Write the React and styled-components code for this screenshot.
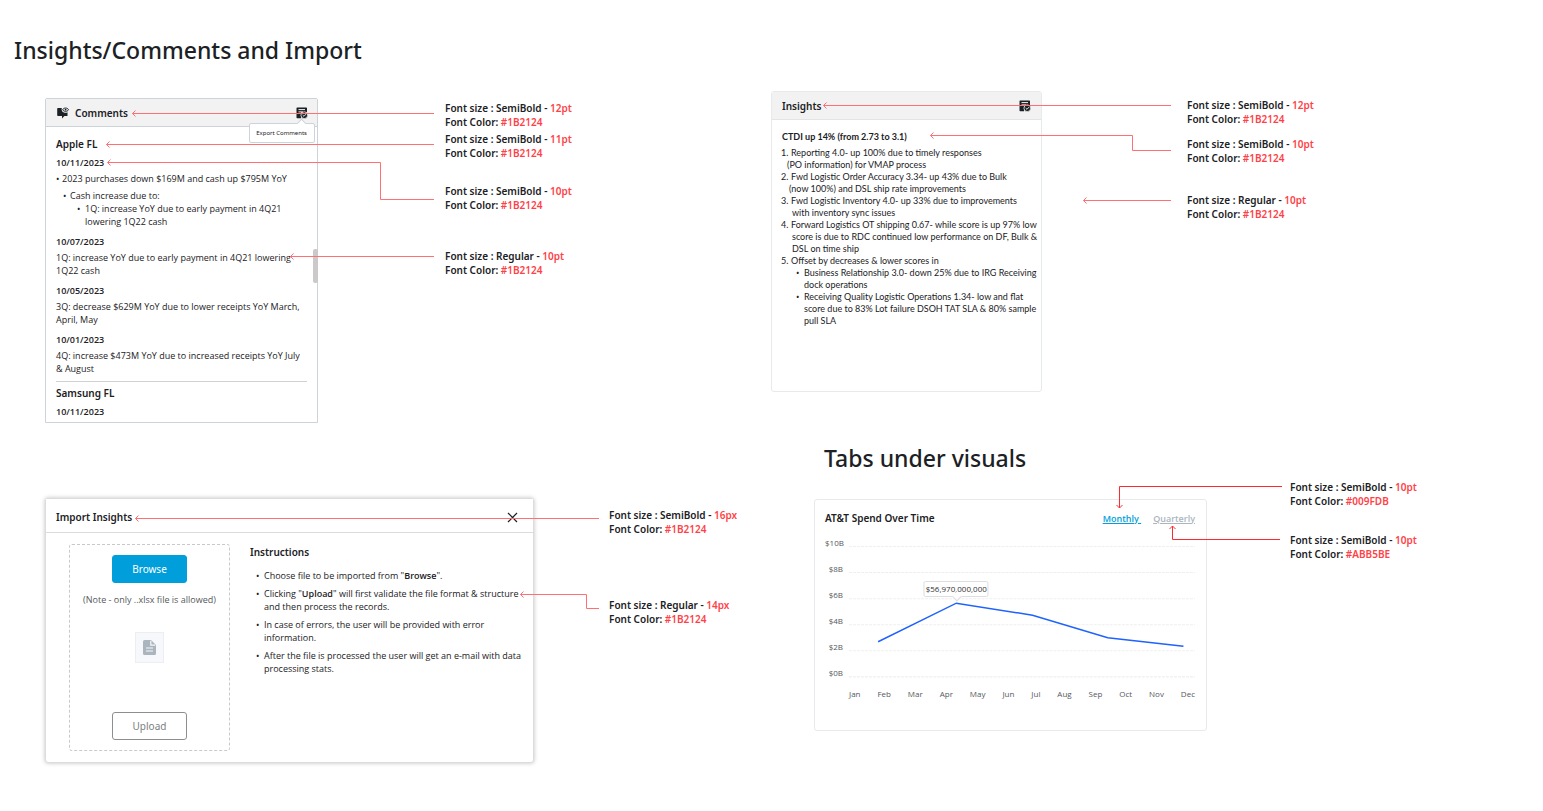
import React from "react";
import styled, { createGlobalStyle } from "styled-components";

const ink = "#1B2124";
const red = "#FF4147";
const labelFont = `"Noto Sans", "Open Sans", sans-serif`;

const GlobalStyle = createGlobalStyle`
  * { box-sizing: border-box; }
  body {
    margin: 0;
    background: #fff;
    color: ${ink};
    font: 400 9px/13px "Open Sans", "Noto Sans", sans-serif;
  }
  h1, h2, h3, h4, p, ul, ol { margin: 0; padding: 0; }
  ul, ol { list-style: none; }
  b { font-weight: 600; }
`;

const Page = styled.main`
  display: grid;
  grid-template-columns: 1fr 1fr;
  padding-right: 1px;
`;

const Column = styled.div`
  display: flex;
  flex-direction: column;
  padding-top: ${(p) => p.$top}px;
  padding-bottom: 24px;
`;

const PageTitle = styled.h1`
  margin-left: ${(p) => p.$left}px;
  font-family: ${labelFont};
  font-size: 23px;
  line-height: 32px;
  font-weight: 500;
`;

const Section = styled.section`
  position: relative;
  display: flex;
  align-items: flex-start;
  margin-top: ${(p) => p.$top}px;
  margin-left: ${(p) => p.$left}px;
`;

const Notes = styled.div`
  display: flex;
  flex-direction: column;
  padding-top: ${(p) => p.$top}px;
  margin-left: ${(p) => p.$left}px;
`;

const NoteText = styled.p`
  margin-top: ${(p) => p.$gap || 0}px;
  font-family: ${labelFont};
  font-size: 10px;
  line-height: 14px;
  font-weight: 600;
  white-space: nowrap;
`;

const Value = styled.span`
  color: ${red};
`;

const ConnectorLayer = styled.svg`
  position: absolute;
  inset: 0;
  width: 100%;
  height: 100%;
  overflow: visible;
  pointer-events: none;
  fill: none;
  stroke: ${(p) => (p.$strong ? "#FF2A30" : "#FF7074")};
  stroke-width: 1;
`;

const Card = styled.article`
  position: relative;
  display: flex;
  flex-direction: column;
  flex: none;
  background: #fff;
  border: 1px solid ${(p) => p.$border || "#e8e9ea"};
  border-radius: 3px;
`;

const CommentsCard = styled(Card)`
  width: 273px;
  height: 325px;
  border-radius: 2px 2px 0 0;
`;

const InsightsCard = styled(Card)`
  width: 271px;
  min-height: 301px;
`;

const ImportCard = styled(Card)`
  width: 489px;
  min-height: 265px;
  box-shadow: 0 0 4px rgba(0, 0, 0, 0.25);
`;

const ChartCard = styled(Card)`
  width: 393px;
  margin-top: 19px;
  padding: 10px 11px 30px 10px;
`;

const CardHeader = styled.header`
  display: flex;
  align-items: center;
  gap: 6px;
  height: 28px;
  flex: none;
  padding: 0 10px;
  background: #f2f2f2;
  border-bottom: 1px solid ${(p) => p.$border};
`;

const CommentsHeader = styled(CardHeader)`
  padding: 0 9px 0 11px;
`;

const ModalHeader = styled(CardHeader)`
  height: 34px;
  padding: 3px 15px 0 10px;
  background: #fff;
`;

const CardTitle = styled.h2`
  flex: 1;
  font-family: ${labelFont};
  font-size: 10px;
  line-height: 16px;
  font-weight: 600;
`;

const IconButton = styled.button`
  display: flex;
  padding: 0;
  border: 0;
  background: none;
  color: ${ink};
  cursor: pointer;
`;

const ExportTip = styled.div`
  position: absolute;
  top: 24px;
  right: 2px;
  padding: 3px 7px 3px 6px;
  font-family: ${labelFont};
  font-size: 6px;
  line-height: 12px;
  background: #fff;
  border: 1px solid #ccd3da;
  border-radius: 2px;

  &::before {
    content: "";
    position: absolute;
    top: -4px;
    right: 9px;
    width: 6px;
    height: 6px;
    background: #fff;
    border: solid #ccd3da;
    border-width: 1px 0 0 1px;
    transform: rotate(45deg);
  }
`;

const ScrollBody = styled.div`
  flex: 1;
  min-height: 0;
  overflow: hidden;
  padding: 9px 10px 0;
`;

const ScrollThumb = styled.div`
  position: absolute;
  top: 150px;
  right: -1px;
  width: 5px;
  height: 34px;
  border-radius: 2px;
  background: #ccc9ca;
`;

const Group = styled.section`
  & + & {
    margin-top: 6px;
    padding-top: 3px;
    border-top: 1px solid #cfd2d4;
  }
`;

const GroupTitle = styled.h3`
  margin-bottom: 4px;
  font-family: ${labelFont};
  font-size: 10px;
  line-height: 16px;
  font-weight: 600;
`;

const Entry = styled.div`
  & + & {
    margin-top: 7px;
  }
`;

const EntryDate = styled.h4`
  margin-bottom: 3px;
  font-size: 9px;
  line-height: 13px;
  font-weight: 600;
`;

const BulletList = styled.ul`
  display: flex;
  flex-direction: column;
  gap: ${(p) => p.$gap || 0}px;
  margin-top: ${(p) => p.$top || 0}px;
  padding-left: ${(p) => p.$indent}px;
`;

const Bullet = styled.li`
  &::before {
    content: "•";
    display: inline-block;
    width: ${(p) => p.$marker || 7}px;
    margin-left: -${(p) => p.$marker || 7}px;
    font-family: "Noto Sans", sans-serif;
    line-height: 1;
  }
`;

const InsightBody = styled.div`
  padding: 11px 0 0 9px;
  font-family: Lato, "Noto Sans", sans-serif;
  font-size: 9px;
  line-height: 12px;
  white-space: nowrap;
`;

const InsightTitle = styled.h3`
  margin: 0 0 4px 1px;
  font-size: 9px;
  line-height: 12px;
  font-weight: 700;
`;

const Numbered = styled.ol`
  counter-reset: insight;
`;

const NumberedItem = styled.li`
  counter-increment: insight;
  padding-left: ${(p) => p.$indent}px;

  &::before {
    content: counter(insight) ".";
    display: inline-block;
    width: 10px;
    margin-left: -${(p) => p.$indent}px;
  }
`;

const ImportBody = styled.div`
  display: flex;
  gap: 20px;
  padding: 11px 10px 11px 23px;
`;

const DropZone = styled.div`
  display: flex;
  flex-direction: column;
  align-items: center;
  flex: none;
  width: 161px;
  height: 207px;
  padding: 10px 0;
  border: 1px dashed #c9c9c9;
  border-radius: 3px;
`;

const ActionButton = styled.button`
  width: 75px;
  height: 28px;
  padding: 0;
  border: 1px solid ${(p) => (p.$primary ? "#009FDB" : "#8c8f91")};
  border-radius: 3px;
  background: ${(p) => (p.$primary ? "#009FDB" : "#fff")};
  color: ${(p) => (p.$primary ? "#fff" : "#7d8082")};
  font: 400 10px/14px ${labelFont};
  cursor: pointer;
`;

const FileHint = styled.p`
  margin-top: 10px;
  line-height: 14px;
  color: #55595c;
`;

const FileTile = styled.div`
  display: flex;
  align-items: center;
  justify-content: center;
  width: 29px;
  height: 31px;
  margin: 25px 0 auto;
  background: #f6f8fc;
  border: 1px solid #eceff2;
`;

const Instructions = styled.div`
  flex: 1;
  white-space: nowrap;
`;

const ChartHeader = styled.header`
  display: flex;
  align-items: center;
  gap: 12px;
`;

const Tab = styled.a`
  color: ${(p) => (p.$active ? "#009FDB" : "#ABB5BE")};
  font-weight: 600;
  text-decoration: underline;
  white-space: pre;
`;

const ChartArea = styled.div`
  display: flex;
  gap: 6px;
  margin-top: 4px;
  color: #55595c;
  font-size: 8px;
`;

const YAxis = styled.div`
  display: flex;
  flex-direction: column;
  width: 18px;
  line-height: 26px;
  text-align: right;
`;

const Plot = styled.div`
  position: relative;
  flex: 1;
  padding-top: 16px;
`;

const PlotSvg = styled.svg`
  display: block;
  width: 100%;
  overflow: visible;
`;

const XAxis = styled.div`
  display: flex;
  justify-content: space-between;
  margin-top: 11px;
  line-height: 12px;
`;

const PointTip = styled.div`
  position: absolute;
  top: 51px;
  left: 31%;
  transform: translateX(-50%);
  padding: 0 1px;
  color: #333;
  line-height: 14px;
  background: #fff;
  border: 1px solid #dedede;
  border-radius: 2px;

  &::after {
    content: "";
    position: absolute;
    left: 50%;
    bottom: -4px;
    width: 6px;
    height: 6px;
    margin-left: -3px;
    background: #fff;
    border: solid #dedede;
    border-width: 0 1px 1px 0;
    transform: rotate(45deg);
  }
`;

function CommentIcon() {
  return (
    <svg width="12" height="12" viewBox="0 0 12 12" aria-hidden="true">
      <path d="M1 1h3.800C4.200 3 5 5 7 5.600c1.300.4 2.600.2 3.500-.4V9H7.400L5 11.600V9H1a.8.8 0 0 1-.8-.8V1.800A.8.8 0 0 1 1 1z" fill={ink} />
      <path d="M5.700 2.700C6.600.5 10.600.5 11.500 2.700 10.600 4.900 6.600 4.900 5.700 2.700z" fill="#f2f2f2" stroke={ink} strokeWidth="1" />
      <circle cx="8.600" cy="2.700" r=".9" fill={ink} />
    </svg>
  );
}

function ExportIcon() {
  return (
    <svg width="12" height="12" viewBox="0 0 12 12" aria-hidden="true">
      <path d="M1.200.5h9.100a.7.7 0 0 1 .7.7V5H5v6.200H1.200a.7.7 0 0 1-.7-.7V1.200a.7.700 0 0 1 .7-.7z" fill={ink} />
      <path d="M2.500 2.600h6.500M2.500 4.900h4.500" stroke="#f2f2f2" strokeWidth="1" />
      <circle cx="8.300" cy="8.200" r="3.400" fill={ink} stroke="#f2f2f2" strokeWidth=".8" />
      <path d="M6.700 8.100l1.300 1.200 2-2.200" fill="none" stroke="#f2f2f2" strokeWidth=".9" />
    </svg>
  );
}

function FileIcon() {
  return (
    <svg width="13" height="15" viewBox="0 0 13 15" aria-hidden="true">
      <path d="M1.500 0H8l5 5v8.500a1.500 1.500 0 0 1-1.500 1.500h-10A1.500 1.500 0 0 1 0 13.500v-12A1.500 1.500 0 0 1 1.500 0z" fill="#abb5be" />
      <path d="M7.800.8v4.400h4.400M3 8h7M3 11h7" fill="none" stroke="#f6f8fc" strokeWidth="1.200" />
    </svg>
  );
}

function CloseIcon() {
  return (
    <svg width="11" height="11" viewBox="0 0 11 11" aria-hidden="true">
      <path d="M1 1l9 9M10 1l-9 9" stroke={ink} strokeWidth="1.200" />
    </svg>
  );
}

const heads = {
  left: "m3-3-3 3 3 3",
  down: "m-3-3 3 3 3-3",
  up: "m-3 3 3-3 3 3",
};

function Connectors({ lines, strong }) {
  return (
    <ConnectorLayer $strong={strong} aria-hidden="true">
      {lines.map(({ at, path, head = "left" }) => (
        <path key={at} d={`M${at}${path}M${at}${heads[head]}`} />
      ))}
    </ConnectorLayer>
  );
}

function Note({ weight = "SemiBold", size, color = "#1B2124", gap }) {
  return (
    <NoteText $gap={gap}>
      Font size : {weight} - <Value>{size}</Value>
      <br />
      Font Color: <Value>{color}</Value>
    </NoteText>
  );
}

const entries = [
  ["10/07/2023", "1Q: increase YoY due to early payment in 4Q21 lowering 1Q22 cash"],
  ["10/05/2023", "3Q: decrease $629M YoY due to lower receipts YoY March, April, May"],
  ["10/01/2023", "4Q: increase $473M YoY due to increased receipts YoY July & August"],
];

function CommentsSection() {
  return (
    <Section $top={32} $left={45}>
      <CommentsCard $border="#ccd3da">
        <CommentsHeader $border="#ccd3da">
          <CommentIcon />
          <CardTitle>Comments</CardTitle>
          <IconButton aria-label="Export comments"><ExportIcon /></IconButton>
        </CommentsHeader>
        <ExportTip role="tooltip">Export Comments</ExportTip>
        <ScrollBody>
          <Group>
            <GroupTitle>Apple FL</GroupTitle>
            <Entry>
              <EntryDate>10/11/2023</EntryDate>
              <BulletList $indent={6}>
                <Bullet $marker={6}>
                  2023 purchases down $169M and cash up $795M YoY
                  <BulletList $indent={8} $top={4}>
                    <Bullet>
                      Cash increase due to:
                      <BulletList $indent={15}>
                        <Bullet $marker={8}>
                          1Q: increase YoY due to early payment in 4Q21
                          <br />
                          lowering 1Q22 cash
                        </Bullet>
                      </BulletList>
                    </Bullet>
                  </BulletList>
                </Bullet>
              </BulletList>
            </Entry>
            {entries.map(([date, text]) => (
              <Entry key={date}>
                <EntryDate>{date}</EntryDate>
                <p>{text}</p>
              </Entry>
            ))}
          </Group>
          <Group>
            <GroupTitle>Samsung FL</GroupTitle>
            <EntryDate>10/11/2023</EntryDate>
          </Group>
        </ScrollBody>
        <ScrollThumb />
      </CommentsCard>
      <Notes $top={3} $left={127}>
        <Note size="12pt" />
        <Note size="11pt" gap={3} />
        <Note size="10pt" gap={24} />
        <Note weight="Regular" size="10pt" gap={37} />
      </Notes>
      <Connectors
        lines={[
          { at: "87.500 15.500", path: "H389" },
          { at: "61.500 46.500", path: "H389" },
          { at: "62.500 64.500", path: "H335.500V101.500H389" },
          { at: "245.500 158.500", path: "H389" },
        ]}
      />
    </Section>
  );
}

function ImportSection() {
  return (
    <Section $top={75} $left={45}>
      <ImportCard $border="#dcdcdc">
        <ModalHeader $border="#dcdcdc">
          <CardTitle>Import Insights</CardTitle>
          <IconButton aria-label="Close"><CloseIcon /></IconButton>
        </ModalHeader>
        <ImportBody>
          <DropZone>
            <ActionButton $primary>Browse</ActionButton>
            <FileHint>(Note - only ..xlsx file is allowed)</FileHint>
            <FileTile><FileIcon /></FileTile>
            <ActionButton>Upload</ActionButton>
          </DropZone>
          <Instructions>
            <CardTitle as="h3">Instructions</CardTitle>
            <BulletList $indent={14} $top={9} $gap={5}>
              <Bullet $marker={8}>Choose file to be imported from "<b>Browse</b>".</Bullet>
              <Bullet $marker={8}>
                Clicking "<b>Upload</b>" will first validate the file format &amp; structure
                <br />
                and then process the records.
              </Bullet>
              <Bullet $marker={8}>
                In case of errors, the user will be provided with error
                <br />
                information.
              </Bullet>
              <Bullet $marker={8}>
                After the file is processed the user will get an e-mail with data
                <br />
                processing stats.
              </Bullet>
            </BulletList>
          </Instructions>
        </ImportBody>
      </ImportCard>
      <Notes $top={10} $left={75}>
        <Note size="16px" />
        <Note weight="Regular" size="14px" gap={62} />
      </Notes>
      <Connectors
        lines={[
          { at: "90.500 20.500", path: "H554" },
          { at: "475.500 96.500", path: "H541.500V110.500H554" },
        ]}
      />
    </Section>
  );
}

function InsightsSection() {
  return (
    <Section $top={0} $left={0}>
      <InsightsCard>
        <CardHeader $border="#e2e4e6">
          <CardTitle>Insights</CardTitle>
          <IconButton aria-label="Export insights"><ExportIcon /></IconButton>
        </CardHeader>
        <InsightBody>
          <InsightTitle>CTDI up 14% (from 2.73 to 3.1)</InsightTitle>
          <Numbered>
            <NumberedItem $indent={6}>
              Reporting 4.0- up 100% due to timely responses
              <br />
              (PO information) for VMAP process
            </NumberedItem>
            <NumberedItem $indent={8}>
              Fwd Logistic Order Accuracy 3.34- up 43% due to Bulk
              <br />
              (now 100%) and DSL ship rate improvements
            </NumberedItem>
            <NumberedItem $indent={11}>
              Fwd Logistic Inventory 4.0- up 33% due to improvements
              <br />
              with inventory sync issues
            </NumberedItem>
            <NumberedItem $indent={11}>
              Forward Logistics OT shipping 0.67- while score is up 97% low
              <br />
              score is due to RDC continued low performance on DF, Bulk &amp;
              <br />
              DSL on time ship
            </NumberedItem>
            <NumberedItem $indent={11}>
              Offset by decreases &amp; lower scores in
              <BulletList $indent={12}>
                <Bullet $marker={8}>
                  Business Relationship 3.0- down 25% due to IRG Receiving
                  <br />
                  dock operations
                </Bullet>
                <Bullet $marker={8}>
                  Receiving Quality Logistic Operations 1.34- low and flat
                  <br />
                  score due to 83% Lot failure DSOH TAT SLA &amp; 80% sample
                  <br />
                  pull SLA
                </Bullet>
              </BulletList>
            </NumberedItem>
          </Numbered>
        </InsightBody>
      </InsightsCard>
      <Notes $top={7} $left={145}>
        <Note size="12pt" />
        <Note size="10pt" gap={11} />
        <Note weight="Regular" size="10pt" gap={28} />
      </Notes>
      <Connectors
        lines={[
          { at: "52.500 14.500", path: "H400" },
          { at: "159.500 44.500", path: "H361.500V59.500H400" },
          { at: "312.500 109.500", path: "H400" },
        ]}
      />
    </Section>
  );
}

const months = ["Jan", "Feb", "Mar", "Apr", "May", "Jun", "Jul", "Aug", "Sep", "Oct", "Nov", "Dec"];
const amounts = ["$10B", "$8B", "$6B", "$4B", "$2B", "$0B"];

function ChartSection() {
  return (
    <Section $top={6} $left={43}>
      <ChartCard>
        <ChartHeader>
          <CardTitle>AT&amp;T Spend Over Time</CardTitle>
          <Tab href="#monthly" $active>{"Monthly "}</Tab>
          <Tab href="#quarterly">Quarterly</Tab>
        </ChartHeader>
        <ChartArea>
          <YAxis>
            {amounts.map((a) => <span key={a}>{a}</span>)}
          </YAxis>
          <Plot>
            <PlotSvg viewBox="0 0 345 131" role="img" aria-label="Spend over time">
              {amounts.map((a, i) => (
                <line key={a} x1="0" x2="345" y1={i * 26 + 0.5} y2={i * 26 + 0.5} stroke="#efefef" strokeDasharray="3 1" />
              ))}
              <polyline points="29,95.500 107,57 183,69 258,91.500 333.500,100" fill="none" stroke="#1f62ff" strokeWidth="1.500" />
            </PlotSvg>
            <PointTip>$56,970,000,000</PointTip>
            <XAxis>
              {months.map((m) => <span key={m}>{m}</span>)}
            </XAxis>
          </Plot>
        </ChartArea>
      </ChartCard>
      <Notes $top={0} $left={83}>
        <Note size="10pt" color="#009FDB" />
        <Note size="10pt" color="#ABB5BE" gap={25} />
      </Notes>
      <Connectors
        strong
        lines={[
          { at: "305.500 28", path: "V6.500H468", head: "down" },
          { at: "358.500 46", path: "V59.500H466", head: "up" },
        ]}
      />
    </Section>
  );
}

export default function App() {
  return (
    <>
      <GlobalStyle />
      <Page>
        <Column $top={34}>
          <PageTitle $left={14}>Insights/Comments and Import</PageTitle>
          <CommentsSection />
          <ImportSection />
        </Column>
        <Column $top={91}>
          <InsightsSection />
          <Section as="div" $top={50} $left={53}>
            <PageTitle as="h2" $left={0}>Tabs under visuals</PageTitle>
          </Section>
          <ChartSection />
        </Column>
      </Page>
    </>
  );
}
